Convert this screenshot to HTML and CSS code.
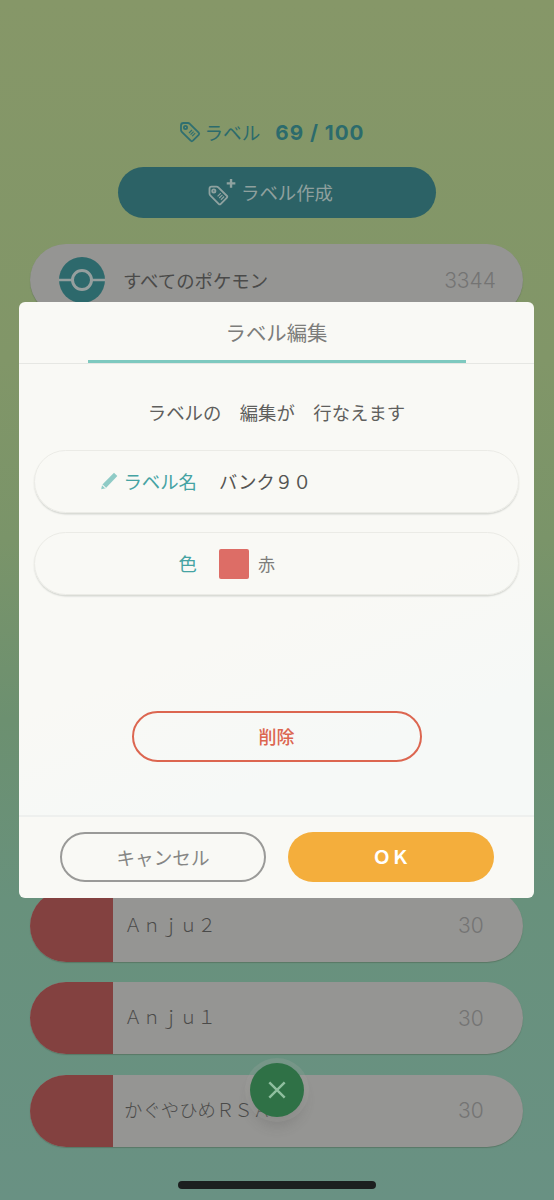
FILE: index.html
```html
<!DOCTYPE html>
<html lang="ja">
<head>
<meta charset="utf-8">
<title>ラベル編集</title>
<link rel="stylesheet" href="styles.css">
</head>
<body>
<div class="screen">
  <div class="count-line">
    <svg class="tag-icon" viewBox="0 0 24 24"><g fill="none" stroke="#2f6f70" stroke-width="1.8" stroke-linejoin="round"><path d="M3 5.5 Q3 3 5.5 3 H10 Q11 3 11.8 3.8 L20.7 12.7 Q21.7 13.8 20.7 14.9 L14.9 20.7 Q13.8 21.7 12.7 20.7 L3.8 11.8 Q3 11 3 10 Z"/><circle cx="7.5" cy="7.5" r="1.6"/><path d="M11 13 L14 10 M12.6 14.6 L15.6 11.6 M14.2 16.2 L17.2 13.2" stroke-width="1.2"/></g></svg>
    <span class="count-label">ラベル</span>
    <span class="count-num">69 / 100</span>
  </div>
  <div class="create-btn">
    <svg class="tag-plus" viewBox="0 0 30 26"><g fill="none" stroke="#8fa2a0" stroke-width="1.7" stroke-linejoin="round"><path d="M2 10 Q2 8 4 8 H8.5 Q9.5 8 10.2 8.7 L18 16.5 Q19 17.5 18 18.5 L12.5 24 Q11.5 25 10.5 24 L2.7 16.2 Q2 15.5 2 14.5 Z"/><circle cx="6" cy="12" r="1.5"/><path d="M9.5 17 L12.5 14 M11 18.6 L14 15.6 M12.6 20.2 L15.6 17.2" stroke-width="1.1"/><path d="M22 1 V9 M18 5 H26" stroke-width="2.2"/></g></svg>
    <span>ラベル作成</span>
  </div>
  <div class="list">
    <div class="row row-first">
      <svg class="ball" viewBox="0 0 46 46"><circle cx="23" cy="23" r="23" fill="#2d696c"/><path d="M0 23 H46" stroke="#959f9e" stroke-width="2.5"/><circle cx="23" cy="23" r="9.5" fill="#2d696c" stroke="#959f9e" stroke-width="3"/></svg>
      <span class="row-name all-name">すべてのポケモン</span>
      <span class="row-count wide">3344</span>
    </div>
    <div class="list-hidden"></div>
    <div class="row">
      <div class="swatch"></div>
      <span class="row-name">Ａｎｊｕ２</span>
      <span class="row-count">30</span>
    </div>
    <div class="row">
      <div class="swatch"></div>
      <span class="row-name">Ａｎｊｕ１</span>
      <span class="row-count">30</span>
    </div>
    <div class="row">
      <div class="swatch"></div>
      <span class="row-name">かぐやひめＲＳＡ</span>
      <span class="row-count">30</span>
    </div>
  </div>

  <div class="fab">
    <svg viewBox="0 0 20 20"><path d="M3 3 L17 17 M17 3 L3 17" stroke="#8fbf9f" stroke-width="2.2" fill="none"/></svg>
  </div>

  <div class="modal">
    <div class="modal-head">
      <div class="modal-title">ラベル編集</div>
      <div class="modal-bar"></div>
    </div>
    <div class="modal-body">
      <p class="message">ラベルの　編集が　行なえます</p>
      <div class="field">
        <div class="field-label">
          <svg class="pencil" viewBox="0 0 18 18"><path d="M13.5 1.5 L16.5 4.5 L6 15.5 L2 16.5 L2.8 12.3 Z" fill="#8fcbc6"/><path d="M2.8 12.3 L6 15.5" stroke="#f9f9f5" stroke-width="1"/></svg>
          <span>ラベル名</span>
        </div>
        <span class="field-value">バンク９０</span>
      </div>
      <div class="field">
        <div class="field-label"><span>色</span></div>
        <div class="color-chip"></div>
        <span class="color-name">赤</span>
      </div>
      <div class="delete-wrap"><div class="delete-btn">削除</div></div>
    </div>
    <div class="modal-foot">
      <div class="btn btn-cancel">キャンセル</div>
      <div class="btn btn-ok">ＯＫ</div>
    </div>
  </div>

  <div class="home-bar"></div>
</div>
</body>
</html>
```
FILE: styles.css
```css
* { box-sizing: border-box; }
html, body { margin: 0; padding: 0; }
body { font-family: "Noto Sans CJK JP", "Noto Sans", sans-serif; }
.screen {
  position: relative;
  width: 554px;
  height: 1200px;
  overflow: hidden;
  padding: 116px 31px 0 30px;
  background: linear-gradient(180deg, #869768 0%, #819668 30%, #7a9469 45%, #6c9070 60%, #68917c 75%, #699183 100%);
}
.count-line {
  height: 32px;
  padding-right: 11px;
  display: flex;
  align-items: center;
  justify-content: center;
  color: #2c6b6c;
}
.tag-icon { width: 24px; height: 24px; margin-right: 3px; }
.count-label { font-size: 18.6px; font-weight: 400; padding-bottom: 2px; }
.count-num {
  margin-left: 15px;
  font-family: "Inter", "Liberation Sans", sans-serif;
  font-size: 20.6px;
  font-weight: 700;
  letter-spacing: 1px;
}
.create-btn {
  margin: 19px 87px 0 88px;
  height: 51px;
  padding: 0 12px 2px 0;
  border-radius: 26px;
  background: #2c6266;
  color: #8fa09e;
  font-size: 18.4px;
  display: flex;
  align-items: center;
  justify-content: center;
}
.tag-plus { width: 33px; height: 28px; margin-right: 1px; margin-left: -2px; }
.list {
  margin-top: 26px;
  display: flex;
  flex-direction: column;
  gap: 20.4px;
}
.row {
  position: relative;
  height: 72px;
  border-radius: 36px;
  background: #959593;
  box-shadow: 0 1px 1px rgba(70, 90, 70, 0.45);
  display: flex;
  align-items: center;
  overflow: hidden;
  color: #4a4a49;
}
.row-first { padding-left: 29px; }
.ball { width: 46px; height: 46px; flex: none; }
.swatch { width: 83px; height: 100%; background: #834140; flex: none; }
.row-name {
  margin-left: 11px;
  font-size: 18.4px;
  font-weight: 300;
  white-space: nowrap;
  flex: 1;
  transform: translateY(-2px);
}
.all-name { margin-left: 18px; font-weight: 400; transform: none; }
.row-count {
  width: 39px;
  margin-right: 26px;
  flex: none;
  font-family: "Inter", "Liberation Sans", sans-serif;
  font-size: 21px;
  font-weight: 300;
  color: #747473;
}
.row-count.wide { width: auto; margin-right: 27px; }
.list-hidden { height: 533px; }

.fab {
  position: absolute;
  left: 250px;
  top: 1063px;
  width: 54px;
  height: 54px;
  border-radius: 50%;
  background: #2f7146;
  box-shadow: 0 0 0 5px rgba(170, 170, 165, 0.22), 0 10px 12px rgba(70, 70, 70, 0.18);
  display: flex;
  align-items: center;
  justify-content: center;
}
.fab svg { width: 22px; height: 22px; }

.modal {
  position: absolute;
  left: 19px;
  top: 302px;
  width: 515px;
  height: 596px;
  border-radius: 6px;
  background: #f9f9f5;
  display: flex;
  flex-direction: column;
  overflow: hidden;
}
.modal-head {
  height: 62px;
  flex: none;
  display: flex;
  flex-direction: column;
  align-items: center;
  border-bottom: 1px solid #e6e7e3;
}
.modal-title {
  margin-top: 15px;
  height: 30px;
  line-height: 30px;
  font-size: 20.4px;
  font-weight: 400;
  color: #7d7d7b;
}
.modal-bar {
  margin-top: auto;
  width: 378px;
  height: 3px;
  background: #7ec9bf;
}
.modal-body {
  flex: 1;
  padding: 0 15px;
  background: linear-gradient(160deg, #f9f9f5 55%, #f6f9f7 80%);
}
.message {
  margin: 31px 0 0;
  height: 34px;
  line-height: 34px;
  text-align: center;
  font-size: 18.4px;
  font-weight: 400;
  color: #5f5f5d;
}
.field {
  height: 63px;
  margin-bottom: 19px;
  border-radius: 32px;
  border: 1px solid #ebebe6;
  box-shadow: 0 1.5px 1.5px #d6d8d3;
  display: flex;
  align-items: center;
}
.message + .field { margin-top: 21px; }
.field-label {
  width: 162px;
  flex: none;
  display: flex;
  justify-content: flex-end;
  align-items: center;
  gap: 4px;
  padding-bottom: 2px;
  font-size: 18.4px;
  color: #45a3a3;
}
.pencil { width: 20px; height: 20px; }
.field-value {
  margin-left: 22px;
  padding-bottom: 2px;
  font-size: 18.3px;
  font-weight: 400;
  color: #555553;
}
.color-chip {
  margin-left: 22px;
  width: 30px;
  height: 30px;
  border-radius: 2px;
  background: #dd6d66;
}
.color-name {
  margin-left: 9px;
  font-size: 17px;
  color: #7d7d7b;
}
.delete-wrap {
  margin-top: 116px;
  display: flex;
  justify-content: center;
}
.delete-btn {
  width: 290px;
  height: 51px;
  padding-bottom: 2px;
  border-radius: 26px;
  border: 2px solid #dc6650;
  display: flex;
  align-items: center;
  justify-content: center;
  font-size: 18px;
  font-weight: 500;
  color: #dc6650;
}
.modal-foot {
  height: 83px;
  flex: none;
  border-top: 2px solid #eef0ee;
  padding: 15px 40px 0 41px;
  display: flex;
  justify-content: space-between;
}
.btn {
  width: 206px;
  height: 50px;
  padding-bottom: 2px;
  border-radius: 25px;
  display: flex;
  align-items: center;
  justify-content: center;
  font-size: 18.6px;
}
.btn-cancel {
  border: 2px solid #9a9a98;
  color: #868684;
  font-weight: 400;
}
.btn-ok {
  background: #f4ae3c;
  color: #fff;
  font-weight: 700;
  font-size: 18.5px;
}
.home-bar {
  position: absolute;
  left: 178px;
  top: 1181px;
  width: 198px;
  height: 8px;
  border-radius: 4px;
  background: #1c1f1f;
}
```
